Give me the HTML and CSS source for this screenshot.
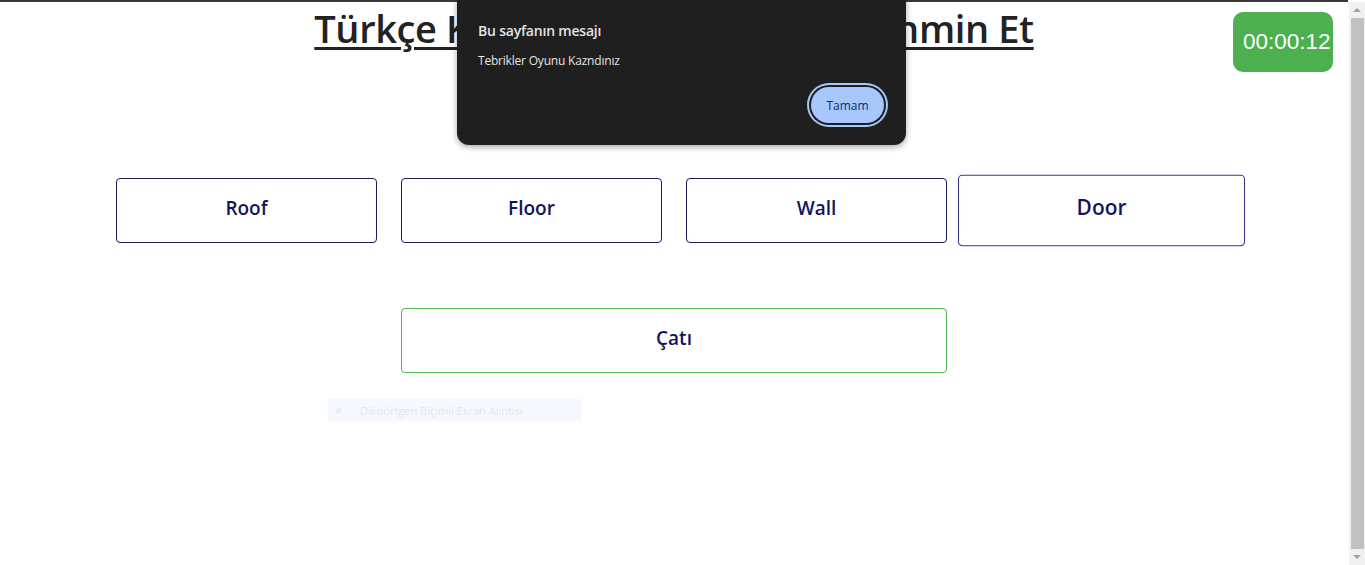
FILE: index.html
```html
<!DOCTYPE html>
<html lang="tr">
<head>
<meta charset="utf-8">
<title>Kelime Oyunu</title>
<link rel="stylesheet" href="styles.css">
</head>
<body>
<div class="topline"></div>
<main class="page">
  <h1 class="title">Türkçe Kelimenin İngilizcesini Tahmin Et</h1>
  <div class="options">
    <div class="option">Roof</div>
    <div class="option">Floor</div>
    <div class="option">Wall</div>
    <div class="option hover">Door</div>
  </div>
  <div class="answer-row">
    <div class="answer">Çatı</div>
  </div>
</main>
<div class="timer">00:00:12</div>
<div class="ghost"><span class="ghost-dot"></span>Dikdörtgen Biçimli Ekran Alıntısı</div>
<div class="dialog">
  <div class="dialog-title">Bu sayfanın mesajı</div>
  <div class="dialog-msg">Tebrikler Oyunu Kazndınız</div>
  <div class="dialog-actions"><button class="dialog-btn">Tamam</button></div>
</div>
<div class="scrollbar">
  <div class="sb-arrow up"></div>
  <div class="sb-thumb"></div>
  <div class="sb-arrow down"></div>
</div>
</body>
</html>
```
FILE: styles.css
```css
html, body { margin: 0; padding: 0; overflow: hidden; height: 100%; }
body { background: #fff; font-family: "Open Sans", "Noto Sans", sans-serif; width: 1348px; position: relative; }
.topline { height: 2px; background: #3a3a3a; }
.page { display: flex; flex-direction: column; align-items: center; }
.title {
  margin: 0; padding-top: 2px;
  font-size: 38px; font-weight: 600; line-height: 48px;
  color: #222; text-decoration: underline; text-decoration-thickness: 3px; text-underline-offset: 4px;
  letter-spacing: -0.38px;
}
.options { display: flex; gap: 24px; margin-top: 126px; }
.option {
  width: 259px; height: 63px; border: 1px solid #1c1c58; border-radius: 4px; box-sizing: content-box;
  display: flex; align-items: center; justify-content: center;
  font-size: 19px; font-weight: 600; color: #14145a; padding-bottom: 0;
}
.option span, .answer span { display: block; }
.option, .answer { line-height: 26px; }
.option { padding-bottom: 0; }
.option::after, .answer::after { content: ""; display: block; height: 6px; }
.option, .answer { flex-direction: column; }
.option.hover { transform: scale(1.1); border-color: #3a3a8a; }
.answer-row { margin-top: 65px; display: flex; justify-content: center; }
.answer {
  width: 544px; height: 63px; border: 1px solid #4cba4c; border-radius: 4px;
  display: flex; align-items: center; justify-content: center;
  font-size: 19px; font-weight: 600; color: #14145a;
}
.timer {
  position: absolute; top: 12px; right: 15px;
  width: 100px; height: 60px; box-sizing: border-box;
  background: #4caf50; border-radius: 10px; color: #fff;
  font-family: "Liberation Sans", Arial, sans-serif; font-size: 22.5px;
  display: flex; align-items: center; padding-left: 10px;
}
.ghost {
  position: absolute; left: 328px; top: 399px; width: 253px; height: 22px;
  background: #f5f9fd; color: #dfe6ee; font-size: 11px;
  display: flex; align-items: center; box-sizing: border-box; padding-left: 8px; gap: 19px;
}
.ghost-dot { width: 5px; height: 5px; background: #e6edf4; border-radius: 1px; }
.dialog {
  position: absolute; left: 457px; top: -12px; width: 449px; height: 157px;
  background: #1f1f1f; border-radius: 12px; box-sizing: border-box;
  box-shadow: 0 2px 6px rgba(0,0,0,0.35);
  padding: 33px 21px 0 21px; color: #e3e3e3;
  font-family: "Open Sans", "Noto Sans", sans-serif;
}
.dialog-title { font-size: 14px; font-weight: 600; letter-spacing: -0.2px; line-height: 20px; }
.dialog-msg { font-size: 12px; margin-top: 12px; line-height: 16px; letter-spacing: -0.2px; }
.dialog-actions { display: flex; justify-content: flex-end; margin-top: 18px; padding-right: 1px; }
.dialog-btn {
  width: 73px; height: 36px; border: none; border-radius: 18px;
  background: #a8c7fa; color: #062e6f; font-family: inherit; font-size: 12px;
  box-shadow: 0 0 0 2px #1f1f1f, 0 0 0 4px #a8c7fa;
}
.scrollbar {
  position: fixed; top: 2px; right: 0; width: 16px; bottom: 0;
  background: #f1f1f1; display: flex; flex-direction: column; align-items: center;
}
.sb-arrow { width: 0; height: 0; border-left: 4px solid transparent; border-right: 4px solid transparent; margin: 6px 0; }
.sb-arrow.up { border-bottom: 4px solid #a3a3a3; }
.sb-arrow.down { border-top: 4px solid #a3a3a3; }
.sb-thumb { width: 13px; flex: 1; background: #c1c1c1; margin-left: 1px; }
```
